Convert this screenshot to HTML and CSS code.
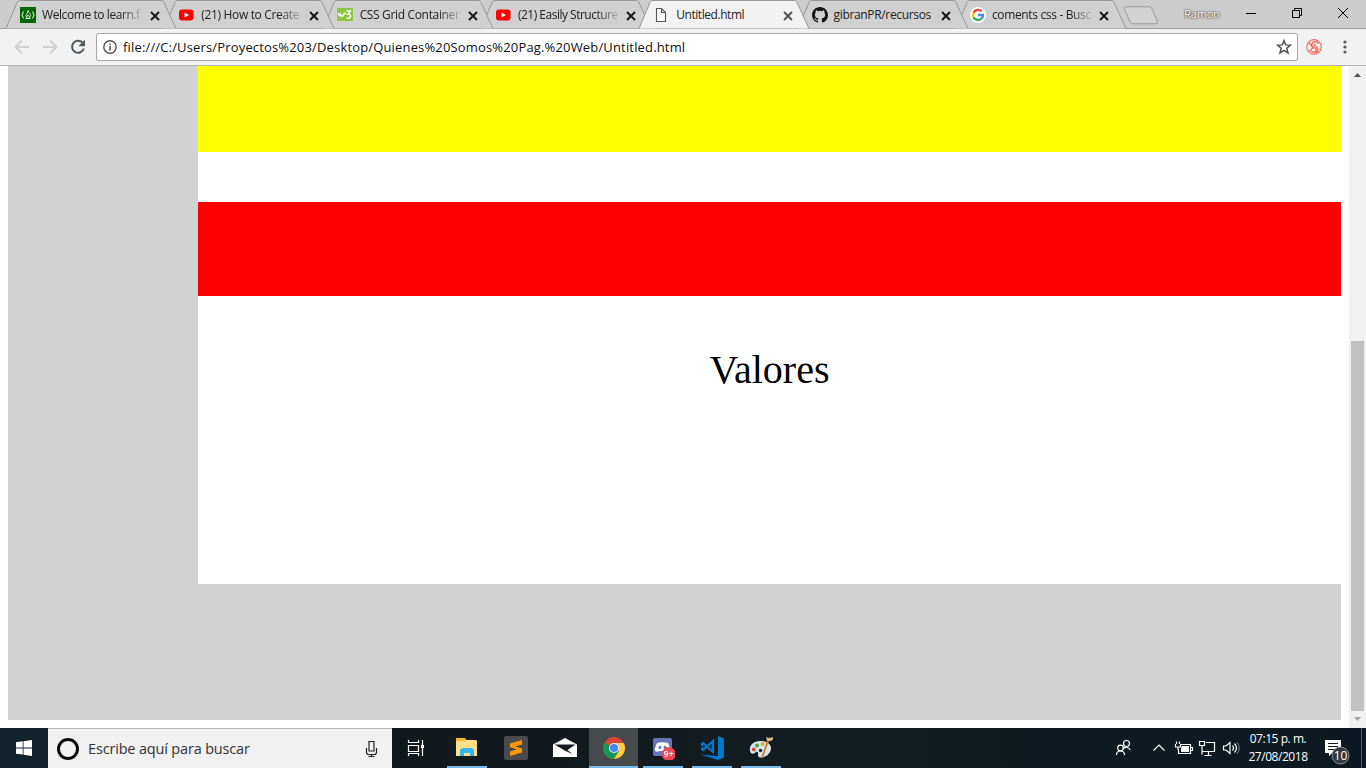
FILE: index.html
```html
<!DOCTYPE html>
<html lang="es">
<head>
<meta charset="utf-8">
<title>Untitled.html</title>
<link rel="stylesheet" href="styles.css">
</head>
<body>
<svg class="defs" width="0" height="0">
  <defs>
    <symbol id="tab-shape" viewBox="0 0 172 29"><path d="M1 28.500L12 2.500Q13 .5 14.500 .5H156.500Q158 .5 159 2.500L171 28.500"/></symbol>
    <symbol id="close" viewBox="0 0 10 10"><path d="M1 1l8 8M9 1L1 9" stroke="currentColor" stroke-width="1.800"/></symbol>
    <symbol id="youtube" viewBox="0 0 16 16"><rect x="1" y="2.500" width="14.500" height="11" rx="3" fill="#f00"/><path d="M6.500 5.500v5L11 8z" fill="#fff"/></symbol>
  </defs>
</svg>
<div class="screen">
  <header class="tabstrip">
    <nav class="tabs">
      <div class="tab t1"><svg class="shape"><use href="#tab-shape"/></svg>
        <svg class="fav" viewBox="0 0 16 16"><path fill="#006400" d="M0 0h16v16H0z"/><path d="M3.500 4.500Q.5 8 3.500 11.500M12.500 4.500q3 3.500 0 7M5.500 11.500h5" fill="none" stroke="#fff"/><path d="M8 3.500q.5 2 2 3 1.500 2-.5 4 0-2-1.500-2.500Q6.500 9 7 10.500q-2.500-2 0-4Q8 5 8 3.500z" fill="none" stroke="#fff" stroke-width=".8"/></svg>
        <span class="title">Welcome to learn.f</span><svg class="x"><use href="#close"/></svg></div>
      <div class="tab t2"><svg class="shape"><use href="#tab-shape"/></svg>
        <svg class="fav"><use href="#youtube"/></svg><span class="title">(21) How to Create</span><svg class="x"><use href="#close"/></svg></div>
      <div class="tab t3"><svg class="shape"><use href="#tab-shape"/></svg>
        <svg class="fav" viewBox="0 0 16 16"><rect y="1" width="16" height="13" rx="1" fill="#8bc73f"/><path d="M1 6q1 4 2.500 2V6m0 2Q5.500 11 7 7L9 6M9.500 4h4l-2.500 3q3 0 2.500 2.500T9.500 11" fill="none" stroke="#fff" stroke-width="1.400"/></svg>
        <span class="title">CSS Grid Container</span><svg class="x"><use href="#close"/></svg></div>
      <div class="tab t4"><svg class="shape"><use href="#tab-shape"/></svg>
        <svg class="fav"><use href="#youtube"/></svg><span class="title">(21) Easily Structure</span><svg class="x"><use href="#close"/></svg></div>
      <div class="tab t5 active"><svg class="shape"><use href="#tab-shape"/></svg>
        <svg class="fav" viewBox="0 0 16 16"><path d="M3.500 1.500h5l4 4v9h-9zM8.500 1.500v4h4" fill="#fafafa" stroke="#555" stroke-width="1.100"/></svg>
        <span class="title">Untitled.html</span><svg class="x"><use href="#close"/></svg></div>
      <div class="tab t6"><svg class="shape"><use href="#tab-shape"/></svg>
        <svg class="fav" viewBox="0 0 16 16"><path fill="#161514" d="M8 0C3.580 0 0 3.580 0 8c0 3.540 2.290 6.530 5.470 7.590.4.070.55-.17.55-.38v-1.490c-2.010.37-2.530-.49-2.690-.94-.09-.23-.48-.94-.82-1.130-.28-.15-.68-.52-.01-.53.63-.01 1.080.58 1.230.82.72 1.210 1.870.87 2.330.66.070-.52.28-.87.51-1.070-1.780-.2-3.640-.89-3.640-3.950 0-.87.31-1.590.82-2.150-.08-.2-.36-1.020.08-2.120 0 0 .67-.21 2.200.82a7.700 7.700 0 0 1 4 0c1.530-1.040 2.200-.82 2.200-.82.44 1.100.16 1.920.08 2.120.51.56.82 1.270.82 2.150 0 3.070-1.870 3.750-3.650 3.950.29.25.54.73.54 1.480v2.200c0 .21.15.46.55.38A8 8 0 0 0 16 8c0-4.420-3.580-8-8-8z"/></svg>
        <span class="title">gibranPR/recursos</span><svg class="x"><use href="#close"/></svg></div>
      <div class="tab t7"><svg class="shape"><use href="#tab-shape"/></svg>
        <svg class="fav" viewBox="0 0 16 16"><circle cx="8" cy="8" r="8" fill="#fff"/><g fill="none" stroke-width="2.300"><path d="M11.600 4.400A5 5 0 0 0 3.600 5.600" stroke="#ea4335"/><path d="M3.600 5.600a5 5 0 0 0 0 4.800" stroke="#fbbc05"/><path d="M3.600 10.400a5 5 0 0 0 7.600 1.400" stroke="#34a853"/><path d="M11.200 11.800Q13 10.500 13 8H8" stroke="#4285f4"/></g></svg>
        <span class="title">coments css - Busc</span><svg class="x"><use href="#close"/></svg></div>
    </nav>
    <svg class="newtab" viewBox="0 0 36 19"><path d="M3 .8h23q2 0 3 2l5 12q1 3-1 3H10q-2 0-3-2L1.500 3Q.5.800 3 .8z" fill="#d3d3d3" stroke="#999"/></svg>
    <span class="user">Ramon</span>
    <svg class="wincontrols" viewBox="0 0 120 28"><path d="M10 13.500h10M56.500 10.500h7v7h-7zM58.500 10.500v-2h7v7h-2M102 8l10 10M112 8l-10 10" fill="none" stroke="#000"/></svg>
  </header>
  <div class="toolbar">
    <svg class="nav" viewBox="0 0 96 36"><g fill="none" stroke="#d0d1d2" stroke-width="1.900"><path d="M29 18H16M22 11.500L15.500 18l6.500 6.500M43 18h13M50 11.500l6.500 6.500-6.500 6.500"/></g><path d="M82.500 13.700A6 6 0 1 0 83.800 19.500" fill="none" stroke="#555a60" stroke-width="2"/><path d="M85 10.500v6.700h-6.700z" fill="#555a60"/></svg>
    <div class="address">
      <svg class="info" viewBox="0 0 14 14"><circle cx="7" cy="7" r="6.200" fill="none" stroke="#505358" stroke-width="1.400"/><path d="M7 6v4.500M7 3.500v1.400" stroke="#505358" stroke-width="1.600"/></svg>
      <span class="url">file:///C:/Users/Proyectos%203/Desktop/Quienes%20Somos%20Pag.%20Web/Untitled.html</span>
      <svg class="star" viewBox="0 0 16 16"><path d="M8 1.600l1.700 4.300 4.700.3-3.600 3 1.200 4.600L8 11.300l-4 2.500 1.200-4.600-3.600-3 4.700-.3z" fill="none" stroke="#505050" stroke-width="1.500"/></svg>
    </div>
    <svg class="ext" viewBox="0 0 16 16"><g fill="none" stroke="#ef7464"><circle cx="8" cy="8" r="7.300" stroke-width="1.200"/><path d="M12.500 5Q11 2 8 3T6 7l4 3q1 2-1 3t-4-1M9.500 5.500q-2-.5-1 1l3 2.500q1.500 3-1.500 5M3 3.500l4 5.500-4 3.500" stroke-width="1.400"/></g></svg>
    <svg class="dots" viewBox="0 0 4 14"><g fill="#585858"><circle cx="2" cy="2" r="1.600"/><circle cx="2" cy="7" r="1.600"/><circle cx="2" cy="12" r="1.600"/></g></svg>
  </div>
  <div class="viewport">
    <main class="grid">
      <section class="yellow"></section>
      <section class="white gap"></section>
      <section class="red"></section>
      <section class="white values">Valores</section>
    </main>
    <div class="scrollbar">
      <svg viewBox="0 0 17 17"><path d="M5 11l3.500-4 3.500 4z" fill="#505050"/></svg>
      <div class="thumb"></div>
      <svg viewBox="0 0 17 17"><path d="M5 6l3.500 4L12 6z" fill="#a3a3a3"/></svg>
    </div>
  </div>
  <footer class="taskbar">
    <div class="start"><svg viewBox="0 0 16 16"><path fill="#fff" d="M0 2.200L6.700 1.300v6.200H0zM7.500 1.200L16 0v7.500H7.500zM0 8.400h6.700v6.200L0 13.700zM7.500 8.400H16V16l-8.500-1.200z"/></svg></div>
    <div class="search"><span class="cortana"></span><span class="hint">Escribe aquí para buscar</span>
      <svg class="mic" viewBox="0 0 13 18"><path d="M4 1.500h5v9.500H4zM1.500 8v4q0 2.500 2 2.500h6q2 0 2-2.500V8M6.500 14.500V17M3.500 16.500h6" fill="none" stroke="#222" stroke-width="1.200"/></svg>
    </div>
    <div class="apps">
      <div class="app view"><svg viewBox="0 0 24 24"><path d="M3.500 4v2.500h10V4M3.500 9.500h10v6h-10zM3.500 20v-2.500h10V20M17.500 4v16" fill="none" stroke="#fff" stroke-width="1.200"/><path d="M16 9h3v3h-3z" fill="#fff"/></svg></div>
      <div class="app open"><svg viewBox="0 0 24 24"><path d="M1 3q0-1 1-1h8l1 2h10l1 1v15H1z" fill="#ffe08a"/><path d="M1 3q0-1 1-1h8l1 2-2 1H1z" fill="#f4b928"/><path d="M5 20v-6l2-2h10l2 2v6h-4v-3H9v3z" fill="#34b4ed"/></svg></div>
      <div class="app"><svg viewBox="0 0 24 24"><rect width="24" height="24" rx="2" fill="#4b4b4b"/><path d="M6 7.500L18 4v4.500l-7 2 7 2v4L6 20v-4.500l7-2.200-7-2z" fill="#ff9800"/></svg></div>
      <div class="app"><svg viewBox="0 0 24 24"><path d="M0 8.500L12 2l12 6.500V21H0z" fill="#fff"/><path d="M1.500 8.500h21l-8 5.500 5 4-8-3.500-1.500-1z" fill="#141b1e"/></svg></div>
      <div class="app open current"><svg viewBox="0 0 24 24"><circle cx="12" cy="12" r="11" fill="#db4437"/><path d="M12 12L2.500 6.500A11 11 0 0 0 12 23l5-8z" fill="#159957"/><path d="M12 7h9.800A11 11 0 0 1 12 23l5-8z" fill="#ffcd40"/><circle cx="12" cy="12" r="5.100" fill="#f1f1f1"/><circle cx="12" cy="12" r="4" fill="#4285f4"/></svg></div>
      <div class="app open"><svg viewBox="0 0 24 24"><path d="M4 2h15q2 0 2 2v19l-4-3H4q-2 0-2-2V4q0-2 2-2z" fill="#6574b8"/><path d="M6 7q5.500-1.500 11 0 2.500 5 2 8-3 1.500-4 0H8q-1 1.500-4 0-.5-3 2-8z" fill="#fff"/><circle cx="9" cy="11.500" r="1.400" fill="#5c6bb1"/><circle cx="14" cy="11.500" r="1.400" fill="#5c6bb1"/><circle cx="17.700" cy="18" r="7" fill="#e8494e"/><text x="17.700" y="21" text-anchor="middle" class="badge">9+</text></svg></div>
      <div class="app open"><svg viewBox="0 0 24 24"><path d="M18 0l6 2.500v19L18 24 0 18.500l18 1.500z" fill="#0078cc"/><path d="M13 5v11L3 7 2 8v5l1 1L13 5z" fill="none" stroke="#0078cc" stroke-width="2.200"/><path d="M1 9.200l1.800 1.600L1 12.400z" fill="#141b1e"/></svg></div>
      <div class="app open"><svg viewBox="0 0 24 24"><path d="M11 5C4 5 0 10 1 15c1 4 4 3 6 1 3-1 2 2 2 4 2 4 13 0 13-8 0-4-5-7-11-7z" fill="#d4e5ef"/><circle cx="4.800" cy="13.500" r="2" fill="#d84a38"/><circle cx="8" cy="9.500" r="2" fill="#4ba743"/><circle cx="13.500" cy="8" r="2" fill="#f0a63a"/><circle cx="11.500" cy="14.500" r="1.700" fill="#18252c"/><path d="M20 5L14.500 20l-2 3V20l5.500-15z" fill="#d57a28"/><path d="M18 5l-1-4 3 1 4-1q1 2-2 4z" fill="#d8b48a"/></svg></div>
    </div>
    <div class="tray">
      <svg class="trayicons" viewBox="0 0 132 40"><g fill="none" stroke="#fff" stroke-width="1.200"><circle cx="17.500" cy="15.500" r="3"/><path d="M14 21q3.500-4 7.500 1"/><circle cx="11.500" cy="20" r="2.800"/><path d="M7.500 27q0-4 4-4t4 4M44.500 22.500l5.500-5.500 5.500 5.500"/><g transform="translate(-2 0)"><path d="M73.500 16.500h10v9h-12v-4M83.500 19.500h2v3h-2M68.500 16v3h5v-3M69.500 13.500v2.500M72.500 13.500v2.500M71 19v3"/></g><g transform="translate(-1 0)"><path d="M98 14.500h8.500v9H94V20M100.500 23.500v4M96.500 27.500h7M91.500 13.500h5v4h-5zM94 17.500v9"/></g><path d="M114.500 18h2.500l4-3.500v11l-4-3.500h-2.500zM123.500 17.500q2 2.500 0 5M125.500 15.500q4 4.500 0 9"/><path d="M128 14q4.500 6 0 12" stroke="#657176"/></g><path d="M73 18h7v6h-8v-4z" fill="#fff"/></svg>
      <div class="clock"><span>07:15 p. m.</span><span>27/08/2018</span></div>
      <svg class="notice" viewBox="0 0 46 40"><path d="M6 12h16v13h-9l-3 3v-3H6z" fill="#fff"/><path d="M9 15.500h10M9 18.500h10M9 21.500h7" stroke="#101c22"/><circle cx="21.500" cy="27.500" r="8.500" fill="#333a3e" stroke="#8c9194"/><text x="21.500" y="31.500" text-anchor="middle" class="count">10</text><path d="M42.500 0v40" stroke="#52606a"/></svg>
    </div>
  </footer>
</div>
</body>
</html>
```
FILE: styles.css
```css
* { box-sizing: border-box; }
body { margin: 0; font-family: "Open Sans", "Noto Sans", sans-serif; overflow: hidden; }
svg { display: block; flex: none; }
.defs { position: absolute; }
.screen { width: 1366px; height: 768px; display: flex; flex-direction: column; background: #fff; }

.tabstrip { height: 29px; flex: none; display: flex; background: #ccc; box-shadow: inset 0 -1px #999; }
.tabs { display: flex; padding-left: 5px; isolation: isolate; }
.tab { position: relative; isolation: isolate; width: 172px; height: 29px; margin-right: -13.7px; display: flex; align-items: center; padding: 0 0 0 15px; color: #222; }
.shape { position: absolute; inset: 0; width: 172px; height: 29px; fill: #d0d0d0; stroke: #979797; z-index: -1; }
.t1 { z-index: 7; } .t2 { z-index: 6; } .t3 { z-index: 5; } .t4 { z-index: 4; }
.t6 { z-index: 2; } .t7 { z-index: 1; }
.active { z-index: 9; }
.active .shape { fill: #f2f2f2; }
.fav { width: 16px; height: 16px; margin-right: 6px; margin-top: 1px; }
.t2 .fav, .t3 .fav, .t4 .fav, .t5 .fav { margin-right: 7px; }
.title { width: 108px; flex: none; font-size: 12px; line-height: 20px; letter-spacing: -.34px; white-space: nowrap; padding-top: 1px; -webkit-mask-image: linear-gradient(to right, #000 78px, transparent 104px); mask-image: linear-gradient(to right, #000 78px, transparent 104px); }
.t1 .title { letter-spacing: -.42px; }
.t4 .title { letter-spacing: -.5px; }
.t5 .title { letter-spacing: -.45px; width: 107px; }
.t6 .title, .t7 .title { width: 107px; }
.t5 .title, .t6 .title { -webkit-mask-image: none; mask-image: none; }
.x { width: 10px; height: 10px; margin-top: 2px; color: #111; }
.active .x { color: #505050; }
.newtab { width: 36px; height: 19px; margin: 6px 0 0 10px; }
.user { width: 38px; margin: 5px 0 0 25px; font-size: 11px; line-height: 18px; letter-spacing: -.2px; color: #fff; text-shadow: 0 0 1px #555, 0 0 2px #555, 0 0 2px #555; }
.wincontrols { width: 120px; height: 28px; margin-left: auto; margin-right: 10px; }
.tabs, .newtab, .user { flex: none; }

.toolbar { height: 37px; flex: none; display: flex; align-items: center; background: #f2f2f2; border-bottom: 1px solid #b4b4b4; }
.nav { width: 96px; height: 36px; }
.address { width: 1202px; height: 28px; display: flex; align-items: center; padding: 0 5px 0 6px; background: #fff; border: 1px solid #a8a8a8; border-radius: 2px; }
.info { width: 14px; height: 14px; }
.url { margin-left: 6px; font-size: 13px; line-height: 20px; letter-spacing: .16px; color: #111; white-space: nowrap; }
.star { width: 16px; height: 16px; margin-left: auto; }
.ext { width: 16px; height: 16px; margin-left: 8px; }
.dots { width: 4px; height: 14px; margin-left: 21px; }

.viewport { height: 662px; flex: none; display: flex; padding-left: 8px; background: #fff; }
.grid { width: 1333px; height: 654px; background: #d3d3d3; padding-left: 190px; }
.yellow { height: 86px; background: #ff0; }
.white { background: #fff; }
.gap { height: 50px; }
.red { height: 94px; background: #f00; }
.values { height: 288px; padding-top: 51px; font: 40px/46px "Liberation Serif", serif; text-align: center; color: #000; }
.scrollbar { width: 17px; margin-left: auto; display: flex; flex-direction: column; justify-content: flex-end; background: #f1f1f1; }
.scrollbar svg { width: 17px; height: 17px; }
.scrollbar svg:first-child { margin-bottom: auto; }
.thumb { height: 370px; margin: 0 2px; background: #c1c1c1; }

.taskbar { height: 40px; flex: none; display: flex; background: linear-gradient(90deg, #10242c, #12191c 390px, #131c20 800px, #0b1a22); }
.start { width: 48px; display: flex; align-items: center; justify-content: center; }
.start svg { width: 16px; height: 16px; }
.search { width: 344px; display: flex; align-items: center; padding: 0 14px 0 9px; background: #f1f1f1; border-top: 1px solid #b9b9b9; }
.cortana { width: 22px; height: 22px; border: 3px solid #0a0a0a; border-radius: 50%; }
.hint { margin-left: 9px; font-size: 14.5px; letter-spacing: -.17px; color: #333; white-space: nowrap; }
.mic { width: 13px; height: 18px; margin-left: auto; }
.apps { display: flex; }
.app { width: 49px; height: 40px; display: flex; align-items: center; justify-content: center; }
.app svg { width: 24px; height: 24px; }
.view { width: 50px; }
.open { background: linear-gradient(#76b9ed, #76b9ed) center bottom / 40px 2px no-repeat; }
.current { background: linear-gradient(#76b9ed, #76b9ed) center bottom / 100% 2px no-repeat, #464b4d; }
.badge { font-size: 8.5px; font-weight: 600; fill: #fff; }
.tray { display: flex; margin-left: auto; color: #fff; }
.trayicons { width: 132px; height: 40px; }
.clock { width: 66px; margin-left: 4px; display: flex; flex-direction: column; align-items: center; padding-top: 2px; font-size: 12px; line-height: 17.5px; letter-spacing: -.45px; white-space: nowrap; }
.notice { width: 46px; height: 40px; margin: 0 1px 0 8px; }
.count { font-size: 12px; fill: #fff; }
```
